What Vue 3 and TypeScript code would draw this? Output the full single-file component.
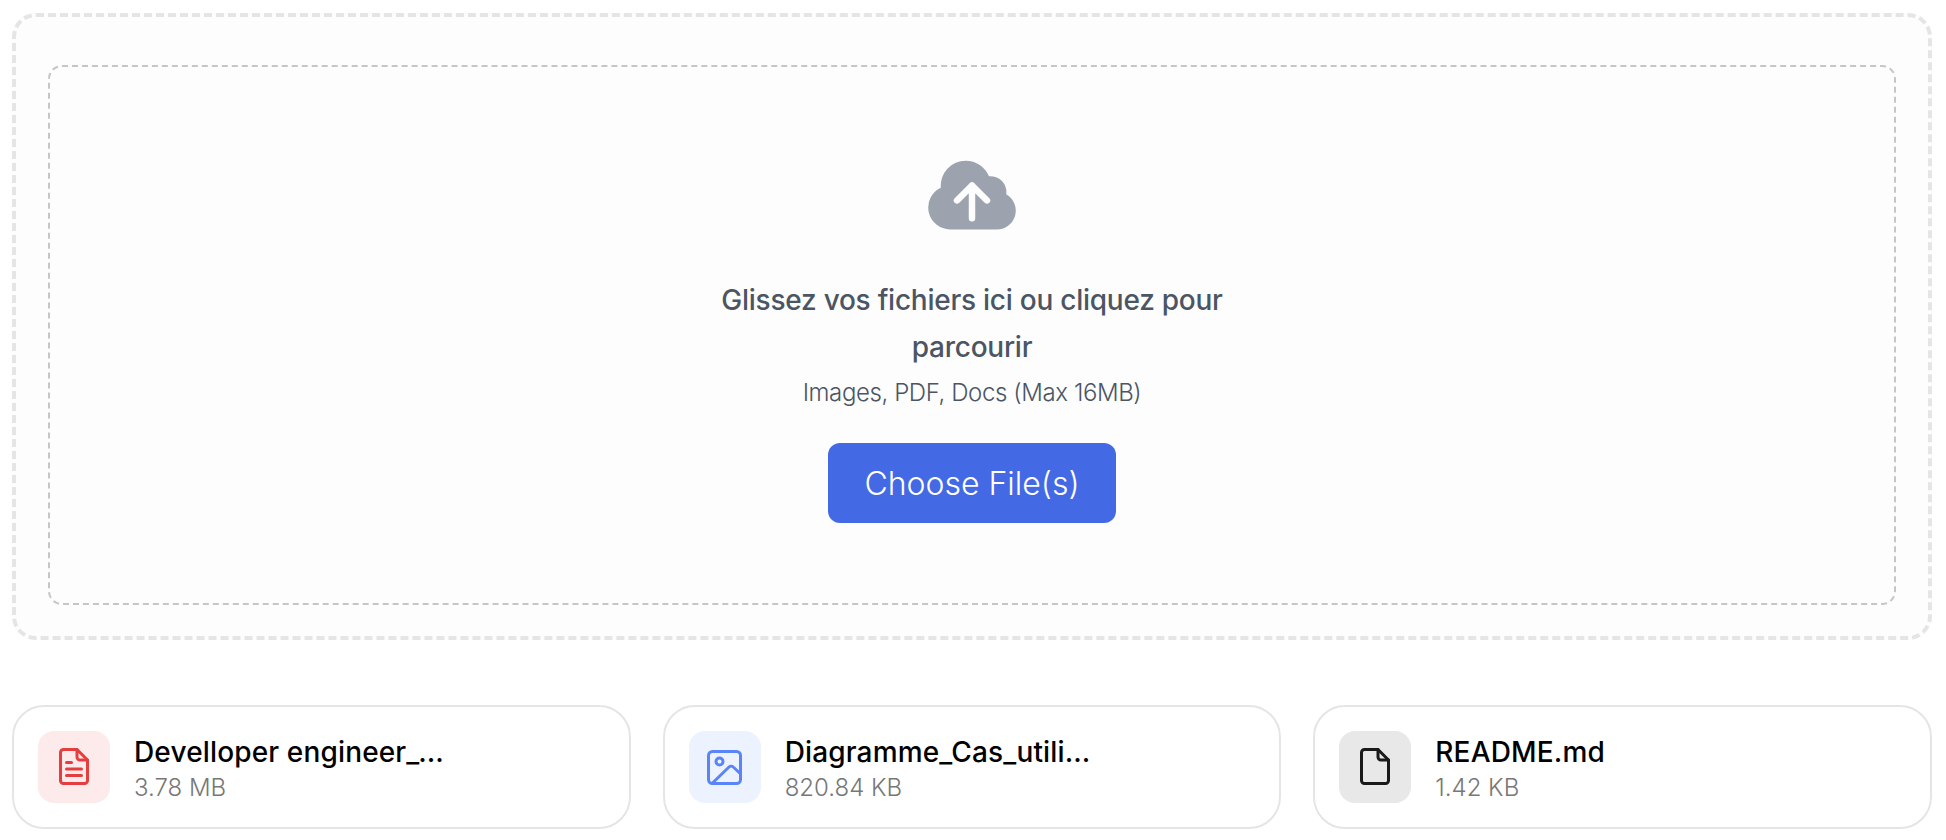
<template>
  <div class="page">
    <div class="dropzone">
      <div class="dropzone-inner">
        <svg class="cloud" viewBox="0 0 24 24" width="100" height="100">
          <path
            fill="#9ca3af"
            d="M10.5 3.75a6 6 0 0 0-5.98 6.496A5.25 5.25 0 0 0 6.75 20.25H18a4.5 4.5 0 0 0 2.206-8.423 3.75 3.75 0 0 0-4.133-4.303A6.001 6.001 0 0 0 10.5 3.75Z"
          />
          <path
            fill="none"
            stroke="#fdfdfd"
            stroke-width="1.55"
            stroke-linecap="round"
            stroke-linejoin="round"
            d="M12 17.6V9.7M8.4 13.3 12 9.7l3.6 3.6"
          />
        </svg>
        <p class="title">Glissez vos fichiers ici ou cliquez pour parcourir</p>
        <p class="hint">Images, PDF, Docs (Max 16MB)</p>
        <button class="choose-btn" type="button">Choose File(s)</button>
      </div>
    </div>

    <div class="files">
      <div v-for="file in files" :key="file.name" class="file-card">
        <div class="file-icon" :class="file.kind">
          <svg
            v-if="file.kind === 'image'"
            viewBox="0 0 40 40"
            width="40"
            height="40"
            fill="none"
            stroke="currentColor"
            stroke-width="3"
            stroke-linecap="round"
            stroke-linejoin="round"
          >
            <rect x="3.5" y="4.5" width="32" height="32" rx="4" />
            <circle cx="14.5" cy="14.5" r="3.5" />
            <path d="M8 35.5 24 20a3 3 0 0 1 4.2 0l7 6.5" />
          </svg>
          <svg
            v-else
            viewBox="0 0 40 40"
            width="40"
            height="40"
            fill="none"
            stroke="currentColor"
            stroke-width="3"
            stroke-linecap="round"
            stroke-linejoin="round"
          >
            <path d="M9.5 2.5H23L33.5 13v20.5a3 3 0 0 1-3 3h-21a3 3 0 0 1-3-3v-28a3 3 0 0 1 3-3Z" />
            <path d="M23 2.5V10a3 3 0 0 0 3 3h7.5" />
            <template v-if="file.kind === 'pdf'">
              <path d="M12.5 15.5h5M12.5 22h15M12.5 28.5h15" />
            </template>
          </svg>
        </div>
        <div class="file-info">
          <div class="file-name">{{ file.name }}</div>
          <div class="file-size">{{ file.size }}</div>
        </div>
      </div>
    </div>
  </div>
</template>

<script setup lang="ts">
interface UploadedFile {
  name: string
  size: string
  kind: 'pdf' | 'image' | 'other'
}

const files: UploadedFile[] = [
  { name: 'Develloper engineer_CV_2024.pdf', size: '3.78 MB', kind: 'pdf' },
  { name: 'Diagramme_Cas_utilisation.png', size: '820.84 KB', kind: 'image' },
  { name: 'README.md', size: '1.42 KB', kind: 'other' },
]
</script>

<style scoped>
.page {
  padding: 13px 14px 11px 12px;
  font-family: Inter, 'Noto Sans', sans-serif;
}
.dropzone {
  border: 4px dashed #e5e5e5;
  border-radius: 24px;
  background-color: #fdfdfd;
  padding: 48px 32px 31px 32px;
}
.dropzone-inner {
  display: flex;
  flex-direction: column;
  align-items: center;
  height: 540px;
  box-sizing: border-box;
  padding-top: 78px;
  border: 2px dashed #c6c6ca;
  border-radius: 14px;
}
.title {
  width: 512px;
  margin: 32px 0 0;
  font-size: 28px;
  font-weight: 500;
  line-height: 47px;
  letter-spacing: -0.25px;
  text-align: center;
  color: #4b5563;
}
.hint {
  margin: 7px 0 0;
  font-size: 24px;
  font-weight: 300;
  line-height: 30px;
  letter-spacing: -0.4px;
  color: #4b5563;
}
.choose-btn {
  width: 288px;
  height: 80px;
  margin-top: 35px;
  border: none;
  border-radius: 12px;
  background-color: #4469e5;
  color: #fff;
  font-family: inherit;
  font-size: 32px;
  font-weight: 300;
  cursor: pointer;
}
.files {
  display: grid;
  grid-template-columns: repeat(3, 1fr);
  gap: 32px;
  margin-top: 65px;
}
.file-card {
  display: flex;
  align-items: center;
  gap: 24px;
  padding: 24px;
  border: 2px solid #e5e5e5;
  border-radius: 32px;
  background-color: #fff;
}
.file-icon {
  display: flex;
  align-items: center;
  justify-content: center;
  flex-shrink: 0;
  width: 72px;
  height: 72px;
  border-radius: 16px;
}
.file-icon.pdf {
  background-color: #fdebeb;
  color: #e53e3e;
}
.file-icon.image {
  background-color: #edf2ff;
  color: #5a85f8;
}
.file-icon.other {
  background-color: #e8e8e8;
  color: #1a1a1a;
}
.file-info {
  min-width: 0;
  padding-top: 3px;
}
.file-name {
  max-width: 320px;
  margin-bottom: 2px;
  overflow: hidden;
  white-space: nowrap;
  text-overflow: ellipsis;
  font-size: 28px;
  font-weight: 500;
  line-height: 36px;
  letter-spacing: 0.15px;
  color: #000;
}
.file-size {
  font-size: 24px;
  font-weight: 300;
  line-height: 31px;
  color: #777;
}
</style>
